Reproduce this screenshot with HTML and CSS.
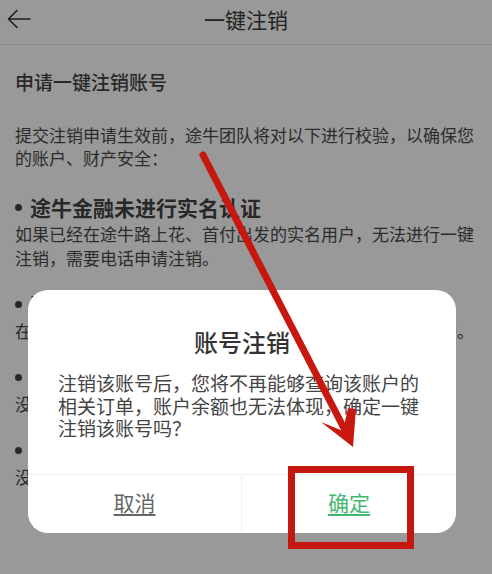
FILE: index.html
```html
<!DOCTYPE html>
<html lang="zh-CN">
<head>
<meta charset="utf-8">
<title>一键注销</title>
<link rel="stylesheet" href="styles.css">
</head>
<body>
<div class="page">
  <header class="topbar">
    <svg class="back" width="24" height="20" viewBox="0 0 24 20" aria-hidden="true">
      <path d="M23 10H2M10 1.5L1.5 10L10 18.5" fill="none" stroke="#333" stroke-width="1.6" stroke-linecap="round" stroke-linejoin="round"/>
    </svg>
    <h1 class="topbar-title">一键注销</h1>
  </header>

  <main class="content">
    <h2 class="heading">申请一键注销账号</h2>
    <p class="intro">提交注销申请生效前，途牛团队将对以下进行校验，以确保您的账户、财产安全：</p>

    <ul class="checks">
      <li class="check">
        <div class="check-title"><span class="dot"></span>途牛金融未进行实名认证</div>
        <p class="check-desc">如果已经在途牛路上花、首付出发的实名用户，无法进行一键注销，需要电话申请注销。</p>
      </li>
      <li class="check">
        <div class="check-title"><span class="dot"></span>账户内无进行中的订单</div>
        <p class="check-desc">在途牛有未出行、未完成或退款中的订单，则暂时无法注销。</p>
      </li>
      <li class="check">
        <div class="check-title"><span class="dot"></span>账户内无未使用的资产</div>
        <p class="check-desc">没有未使用的旅游币、礼品卡等资产。</p>
      </li>
      <li class="check">
        <div class="check-title"><span class="dot"></span>账户无未处理的纠纷</div>
        <p class="check-desc">没有正在处理中的投诉或纠纷。</p>
      </li>
    </ul>
  </main>
</div>

<div class="mask">
  <div class="dialog" role="dialog" aria-labelledby="dlg-title">
    <h3 class="dialog-title" id="dlg-title">账号注销</h3>
    <p class="dialog-text">注销该账号后，您将不再能够查询该账户的相关订单，账户余额也无法体现，确定一键注销该账号吗？</p>
    <div class="dialog-actions">
      <button class="action action-cancel" type="button">取消</button>
      <button class="action action-ok" type="button">确定</button>
    </div>
  </div>
</div>

<svg class="marks" width="492" height="574" viewBox="0 0 492 574" aria-hidden="true">
  <line x1="203" y1="155" x2="349" y2="438" stroke="#c8170f" stroke-width="7" stroke-linecap="round"/>
  <polygon points="321,422 343,431 348,408 356,409 353,447" fill="#c8170f"/>
  <rect x="291.5" y="469.5" width="119" height="76" fill="none" stroke="#c4170f" stroke-width="7"/>
</svg>
</body>
</html>
```

FILE: styles.css
```css
* {
  box-sizing: border-box;
}

html,
body {
  margin: 0;
  padding: 0;
  width: 492px;
  height: 574px;
  overflow: hidden;
  background: #fff;
  font-family: "Noto Sans CJK SC", "Noto Sans", sans-serif;
  color: #4a4a4a;
}

.page {
  width: 492px;
  height: 574px;
}

/* top navigation bar */
.topbar {
  height: 45px;
  border-bottom: 1px solid #e6e6e6;
  display: flex;
  justify-content: center;
  align-items: flex-start;
  position: relative;
}

.back {
  position: absolute;
  left: 7px;
  top: 9px;
}

.topbar-title {
  margin: 0;
  font-size: 21px;
  font-weight: 400;
  line-height: 38px;
  color: #3a3a3a;
}

/* page body */
.content {
  padding: 0 15px;
}

.heading {
  margin: 24px 0 0;
  font-size: 19px;
  font-weight: 500;
  line-height: 26px;
  color: #444;
}

.intro {
  margin: 28px 0 0;
  font-size: 17px;
  line-height: 23px;
}

.checks {
  list-style: none;
  margin: 24px 0 0;
  padding: 0;
  display: flex;
  flex-direction: column;
  gap: 20px;
}

.check-title {
  display: flex;
  align-items: center;
  font-size: 21px;
  font-weight: 700;
  line-height: 28px;
  color: #444;
}

.dot {
  width: 7px;
  height: 7px;
  border-radius: 50%;
  background: #444;
  margin-right: 8px;
}

.check-desc {
  margin: 1px 0 0;
  font-size: 17px;
  line-height: 24px;
}

/* modal layer */
.mask {
  position: fixed;
  inset: 0;
  background: rgba(0, 0, 0, 0.4);
  display: flex;
  align-items: flex-end;
  padding: 0 0 41px 28px;
}

.dialog {
  width: 428px;
  height: 243px;
  background: #fff;
  border-radius: 20px;
  display: flex;
  flex-direction: column;
}

.dialog-title {
  margin: 36px 0 0;
  text-align: center;
  font-size: 24px;
  font-weight: 500;
  line-height: 32px;
  color: #333;
}

.dialog-text {
  margin: 14px 0 0;
  padding: 0 32px 0 30px;
  font-size: 19px;
  line-height: 22.5px;
  color: #444;
  flex: 1;
}

.dialog-actions {
  height: 59px;
  border-top: 1px solid #f0f0f0;
  display: grid;
  grid-template-columns: 214px 1fr;
}

.action {
  border: 0;
  background: none;
  font-family: inherit;
  font-size: 21px;
  line-height: 28px;
  text-decoration: underline;
  text-underline-offset: 3px;
  padding: 0 0 4px;
  cursor: pointer;
}

.action-cancel {
  color: #666;
  border-right: 1px solid #f0f0f0;
}

.action-ok {
  color: #43b86f;
}

/* red annotation strokes drawn above the modal */
.marks {
  position: absolute;
  top: 0;
  left: 0;
  pointer-events: none;
}
```
